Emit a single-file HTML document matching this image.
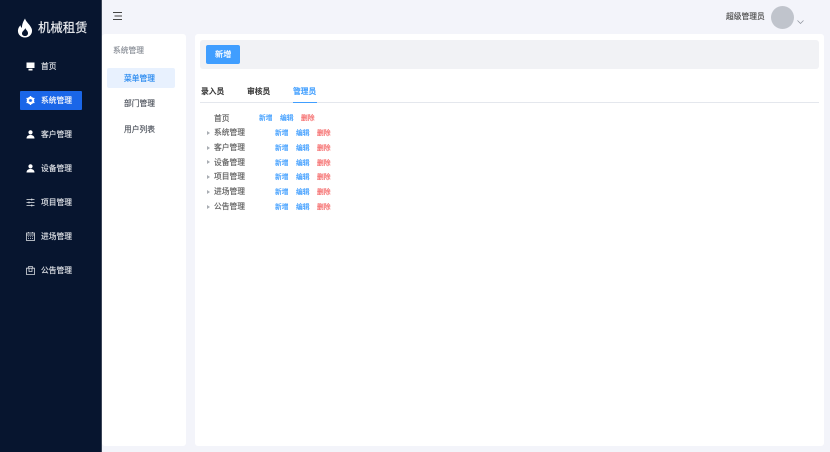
<!DOCTYPE html>
<html lang="zh">
<head>
<meta charset="utf-8">
<style>
html,body{margin:0;padding:0;width:830px;height:452px;overflow:hidden;background:#f3f4fa;font-family:"Liberation Sans","Noto Sans CJK SC",sans-serif}
.a{position:absolute;white-space:nowrap;line-height:12px;-webkit-text-stroke:.2px currentColor;filter:blur(.25px)}
svg{position:absolute;display:block;filter:blur(.2px)}
#side{position:absolute;left:0;top:0;width:101px;height:452px;background:#07152f;border-right:1px solid #3c4658}
.m{color:#d9dce2;font-size:7.75px;left:41px}
.panel{position:absolute;background:#fff;border-radius:3px}
.sub{font-size:7.75px;color:#555a63;left:124px}
.tab{font-size:7.75px;color:#333;top:86px;font-weight:500}
.t{font-size:7.75px;color:#666;left:214px}
.x{font-size:6.8px;line-height:10px}
.b{color:#409eff}.r{color:#f56c6c}
.tri{position:absolute;left:206.5px;width:0;height:0;border-left:3px solid #a9adb3;border-top:2px solid transparent;border-bottom:2px solid transparent}
</style>
</head>
<body>
<div id="side"></div>
<svg style="left:17px;top:18px" width="16" height="20" viewBox="0 0 16 20"><path fill="#fff" fill-rule="evenodd" d="M8 0.5C9 4 13 6.5 14.6 10.5C16.2 15 13 19.5 8 19.5C3.5 19.5 0.5 16 1 12C1.3 9.8 2.4 8.4 3.4 7.2C3.6 8.5 4.2 9.4 5 9.8C4.8 6.5 6.4 3.2 8 0.5ZM8.2 10C8 12 5 13 5 15.5C5 17.2 6.4 18 8 18C9.8 18 11 16.8 11 15.2C11 13 9 12 8.2 10Z"/></svg>
<div class="a" style="left:38px;top:21px;font-size:12.4px;line-height:15px;color:#e8eaee">机械租赁</div>

<svg style="left:26px;top:62px" width="9" height="9" viewBox="0 0 9 9"><path fill="#fff" d="M0.5 0.5H8.5V6H0.5ZM2.5 6.8H6.5V8.5H2.5Z"/></svg>
<div class="a m" style="top:61px">首页</div>

<div style="position:absolute;left:20px;top:91px;width:62px;height:19px;background:#1a66e8;border-radius:1px"></div>
<svg style="left:26px;top:96px" width="9" height="9" viewBox="0 0 9 9"><circle cx="4.5" cy="4.5" r="2.8" fill="none" stroke="#fff" stroke-width="2"/><path stroke="#fff" stroke-width="1.4" d="M4.5 0V9M0.6 2.2L8.4 6.8M0.6 6.8L8.4 2.2" /><circle cx="4.5" cy="4.5" r="1.4" fill="#1a66e8"/></svg>
<div class="a m" style="top:95px;color:#f4f6fb">系统管理</div>

<svg style="left:26px;top:130px" width="9" height="9" viewBox="0 0 9 9"><circle cx="4.5" cy="2.4" r="2.1" fill="#fff"/><path fill="#fff" d="M0.5 8.5C0.5 6.2 2.3 5 4.5 5S8.5 6.2 8.5 8.5Z"/></svg>
<div class="a m" style="top:129px">客户管理</div>

<svg style="left:26px;top:164px" width="9" height="9" viewBox="0 0 9 9"><circle cx="4.5" cy="2.4" r="2.1" fill="#fff"/><path fill="#fff" d="M0.5 8.5C0.5 6.2 2.3 5 4.5 5S8.5 6.2 8.5 8.5Z"/></svg>
<div class="a m" style="top:163px">设备管理</div>

<svg style="left:26px;top:198px" width="9" height="9" viewBox="0 0 9 9"><path stroke="#e8eaee" stroke-width=".8" fill="none" d="M0.5 1.5H8.5M0.5 4.5H8.5M0.5 7.5H8.5M5.8 0.5V2.5M3 3.5V5.5M5.8 6.5V8.5"/></svg>
<div class="a m" style="top:197px">项目管理</div>

<svg style="left:26px;top:232px" width="9" height="9" viewBox="0 0 9 9"><rect x=".5" y="1" width="8" height="7.5" fill="none" stroke="#d9dce2" stroke-width=".8"/><path stroke="#d9dce2" stroke-width=".8" d="M.5 3H8.5M2.5 0V1.5M6.5 0V1.5"/><path stroke="#d9dce2" stroke-width=".7" stroke-dasharray="1 1" d="M2 4.8H7.5M2 6.6H7.5"/></svg>
<div class="a m" style="top:231px">进场管理</div>

<svg style="left:26px;top:266px" width="9" height="9" viewBox="0 0 9 9"><path fill="none" stroke="#d9dce2" stroke-width=".8" d="M.5 2.2H8.5V8.5H.5ZM2 2.2L2.6 .5H6.4L7 2.2M3 2.2V5.5H6V2.2"/></svg>
<div class="a m" style="top:265px">公告管理</div>

<svg style="left:113px;top:12px" width="9" height="8" viewBox="0 0 9 8"><path stroke="#444" stroke-width="1" fill="none" d="M0 .5H9M1.5 4H9M0 7.5H9"/></svg>
<div class="a" style="left:726px;top:11px;font-size:7.75px;color:#555">超级管理员</div>
<div style="position:absolute;left:771px;top:6px;width:23px;height:23px;border-radius:50%;background:#c0c4cc"></div>
<svg style="left:797px;top:20px" width="7" height="4" viewBox="0 0 7 4"><path d="M.5 .5L3.5 3.5L6.5 .5" fill="none" stroke="#8a8f98" stroke-width=".7"/></svg>

<div class="panel" style="left:102px;top:34px;width:84px;height:412px"></div>
<div class="a" style="left:113px;top:45px;font-size:7.75px;color:#8f949c">系统管理</div>
<div style="position:absolute;left:107px;top:68px;width:68px;height:20px;background:#e8f1fe;border-radius:2px"></div>
<div class="a sub" style="top:72.5px;color:#2d8cf0">菜单管理</div>
<div class="a sub" style="top:98px">部门管理</div>
<div class="a sub" style="top:123.5px">用户列表</div>

<div class="panel" style="left:195px;top:34px;width:629px;height:412px"></div>
<div style="position:absolute;left:200px;top:40px;width:619px;height:29px;background:#f1f2f5;border-radius:3px"></div>
<div style="position:absolute;left:206px;top:45px;width:34px;height:19px;background:#409eff;border-radius:2px"></div>
<div class="a" style="left:215px;top:49px;font-size:8.2px;color:#fff">新增</div>

<div class="a tab" style="left:201px">录入员</div>
<div class="a tab" style="left:247px">审核员</div>
<div class="a tab" style="left:293px;color:#409eff">管理员</div>
<div style="position:absolute;left:200px;top:102px;width:619px;height:1px;background:#e4e7ed"></div>
<div style="position:absolute;left:293px;top:102px;width:24px;height:1px;background:#409eff"></div>

<div class="a t" style="top:112.5px">首页</div>
<div class="a x b" style="left:259px;top:114px">新增</div>
<div class="a x b" style="left:280px;top:114px">编辑</div>
<div class="a x r" style="left:301px;top:114px">删除</div>

<div class="tri" style="top:131px"></div><div class="a t" style="top:127px">系统管理</div>
<div class="a x b" style="left:275px;top:129px">新增</div><div class="a x b" style="left:296px;top:129px">编辑</div><div class="a x r" style="left:317px;top:129px">删除</div>

<div class="tri" style="top:146px"></div><div class="a t" style="top:141.5px">客户管理</div>
<div class="a x b" style="left:275px;top:143.5px">新增</div><div class="a x b" style="left:296px;top:143.5px">编辑</div><div class="a x r" style="left:317px;top:143.5px">删除</div>

<div class="tri" style="top:160px"></div><div class="a t" style="top:156.5px">设备管理</div>
<div class="a x b" style="left:275px;top:158.5px">新增</div><div class="a x b" style="left:296px;top:158.5px">编辑</div><div class="a x r" style="left:317px;top:158.5px">删除</div>

<div class="tri" style="top:175px"></div><div class="a t" style="top:171px">项目管理</div>
<div class="a x b" style="left:275px;top:173px">新增</div><div class="a x b" style="left:296px;top:173px">编辑</div><div class="a x r" style="left:317px;top:173px">删除</div>

<div class="tri" style="top:190px"></div><div class="a t" style="top:186px">进场管理</div>
<div class="a x b" style="left:275px;top:188px">新增</div><div class="a x b" style="left:296px;top:188px">编辑</div><div class="a x r" style="left:317px;top:188px">删除</div>

<div class="tri" style="top:205px"></div><div class="a t" style="top:200.5px">公告管理</div>
<div class="a x b" style="left:275px;top:202.5px">新增</div><div class="a x b" style="left:296px;top:202.5px">编辑</div><div class="a x r" style="left:317px;top:202.5px">删除</div>
</body>
</html>
